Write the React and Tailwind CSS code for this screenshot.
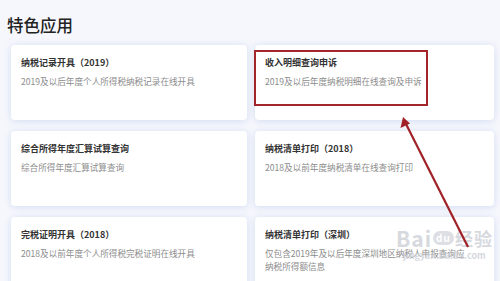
import React from "react";

const cards = [
  { t: "纳税记录开具（2019）", d: ["2019及以后年度个人所得税纳税记录在线开具"] },
  { t: "收入明细查询申诉", d: ["2019及以后年度纳税明细在线查询及申诉"], box: true },
  { t: "综合所得年度汇算试算查询", d: ["综合所得年度汇算试算查询"] },
  { t: "纳税清单打印（2018）", d: ["2018及以前年度纳税清单在线查询打印"] },
  { t: "完税证明开具（2018）", d: ["2018及以前年度个人所得税完税证明在线开具"] },
  { t: "纳税清单打印（深圳）", d: ["仅包含2019年及以后年度深圳地区纳税人申报查询应", "纳税所得额信息"] },
];

export default function App() {
  return (
    <div
      className="relative w-[500px] h-[281px] overflow-hidden bg-[#f5f7fc]"
      style={{ fontFamily: '"Noto Sans CJK SC", "Noto Sans", sans-serif' }}
    >
      <div className="pl-[7px] pt-[15px] h-[45px] text-[16.5px] leading-[21px] font-medium text-[#222]">
        特色应用
      </div>
      <div className="ml-[11px] grid grid-cols-[236px_239px] gap-x-[8px] gap-y-[11px]">
        {cards.map((c, i) => (
          <div
            key={i}
            className="relative h-[75px] rounded-[4px] bg-white px-[10px] pt-[12px] shadow-[0_1px_7px_rgba(160,180,230,0.4)]"
          >
            <div className="text-[9px] leading-[12px] font-semibold text-[#333]">{c.t}</div>
            <div className="mt-[6px] text-[8.6px] leading-[13px] text-[#8c8c8c]">
              {c.d.map((l, j) => (
                <div key={j}>{l}</div>
              ))}
            </div>
            {c.box && (
              <div className="absolute left-[-1px] top-[5px] w-[174px] h-[56px] border-2 border-[#a3262a]" />
            )}
          </div>
        ))}
      </div>

      {/* watermark */}
      <div className="absolute left-[396px] top-[226px] flex flex-col items-center text-[#cdd0d7] opacity-80">
        <div className="flex items-center text-[21px] leading-[24px] font-bold tracking-[1px]">
          <span>Bai</span>
          <span className="mx-[1px] rounded-full bg-[#d5d8df] text-white text-[10px] leading-[14px] px-[3px]">du</span>
          <span className="text-[18px]">经验</span>
        </div>
        <div className="text-[9px] leading-[11px] font-semibold">jingyan.baidu.com</div>
      </div>

      {/* arrow */}
      <svg className="absolute left-0 top-0" width="500" height="281" viewBox="0 0 500 281">
        <line x1="468" y1="247" x2="406" y2="124" stroke="#a02228" strokeWidth="2.2" />
        <polygon points="403,117 400.5,128 410,123.5" fill="#a02228" />
      </svg>
    </div>
  );
}
